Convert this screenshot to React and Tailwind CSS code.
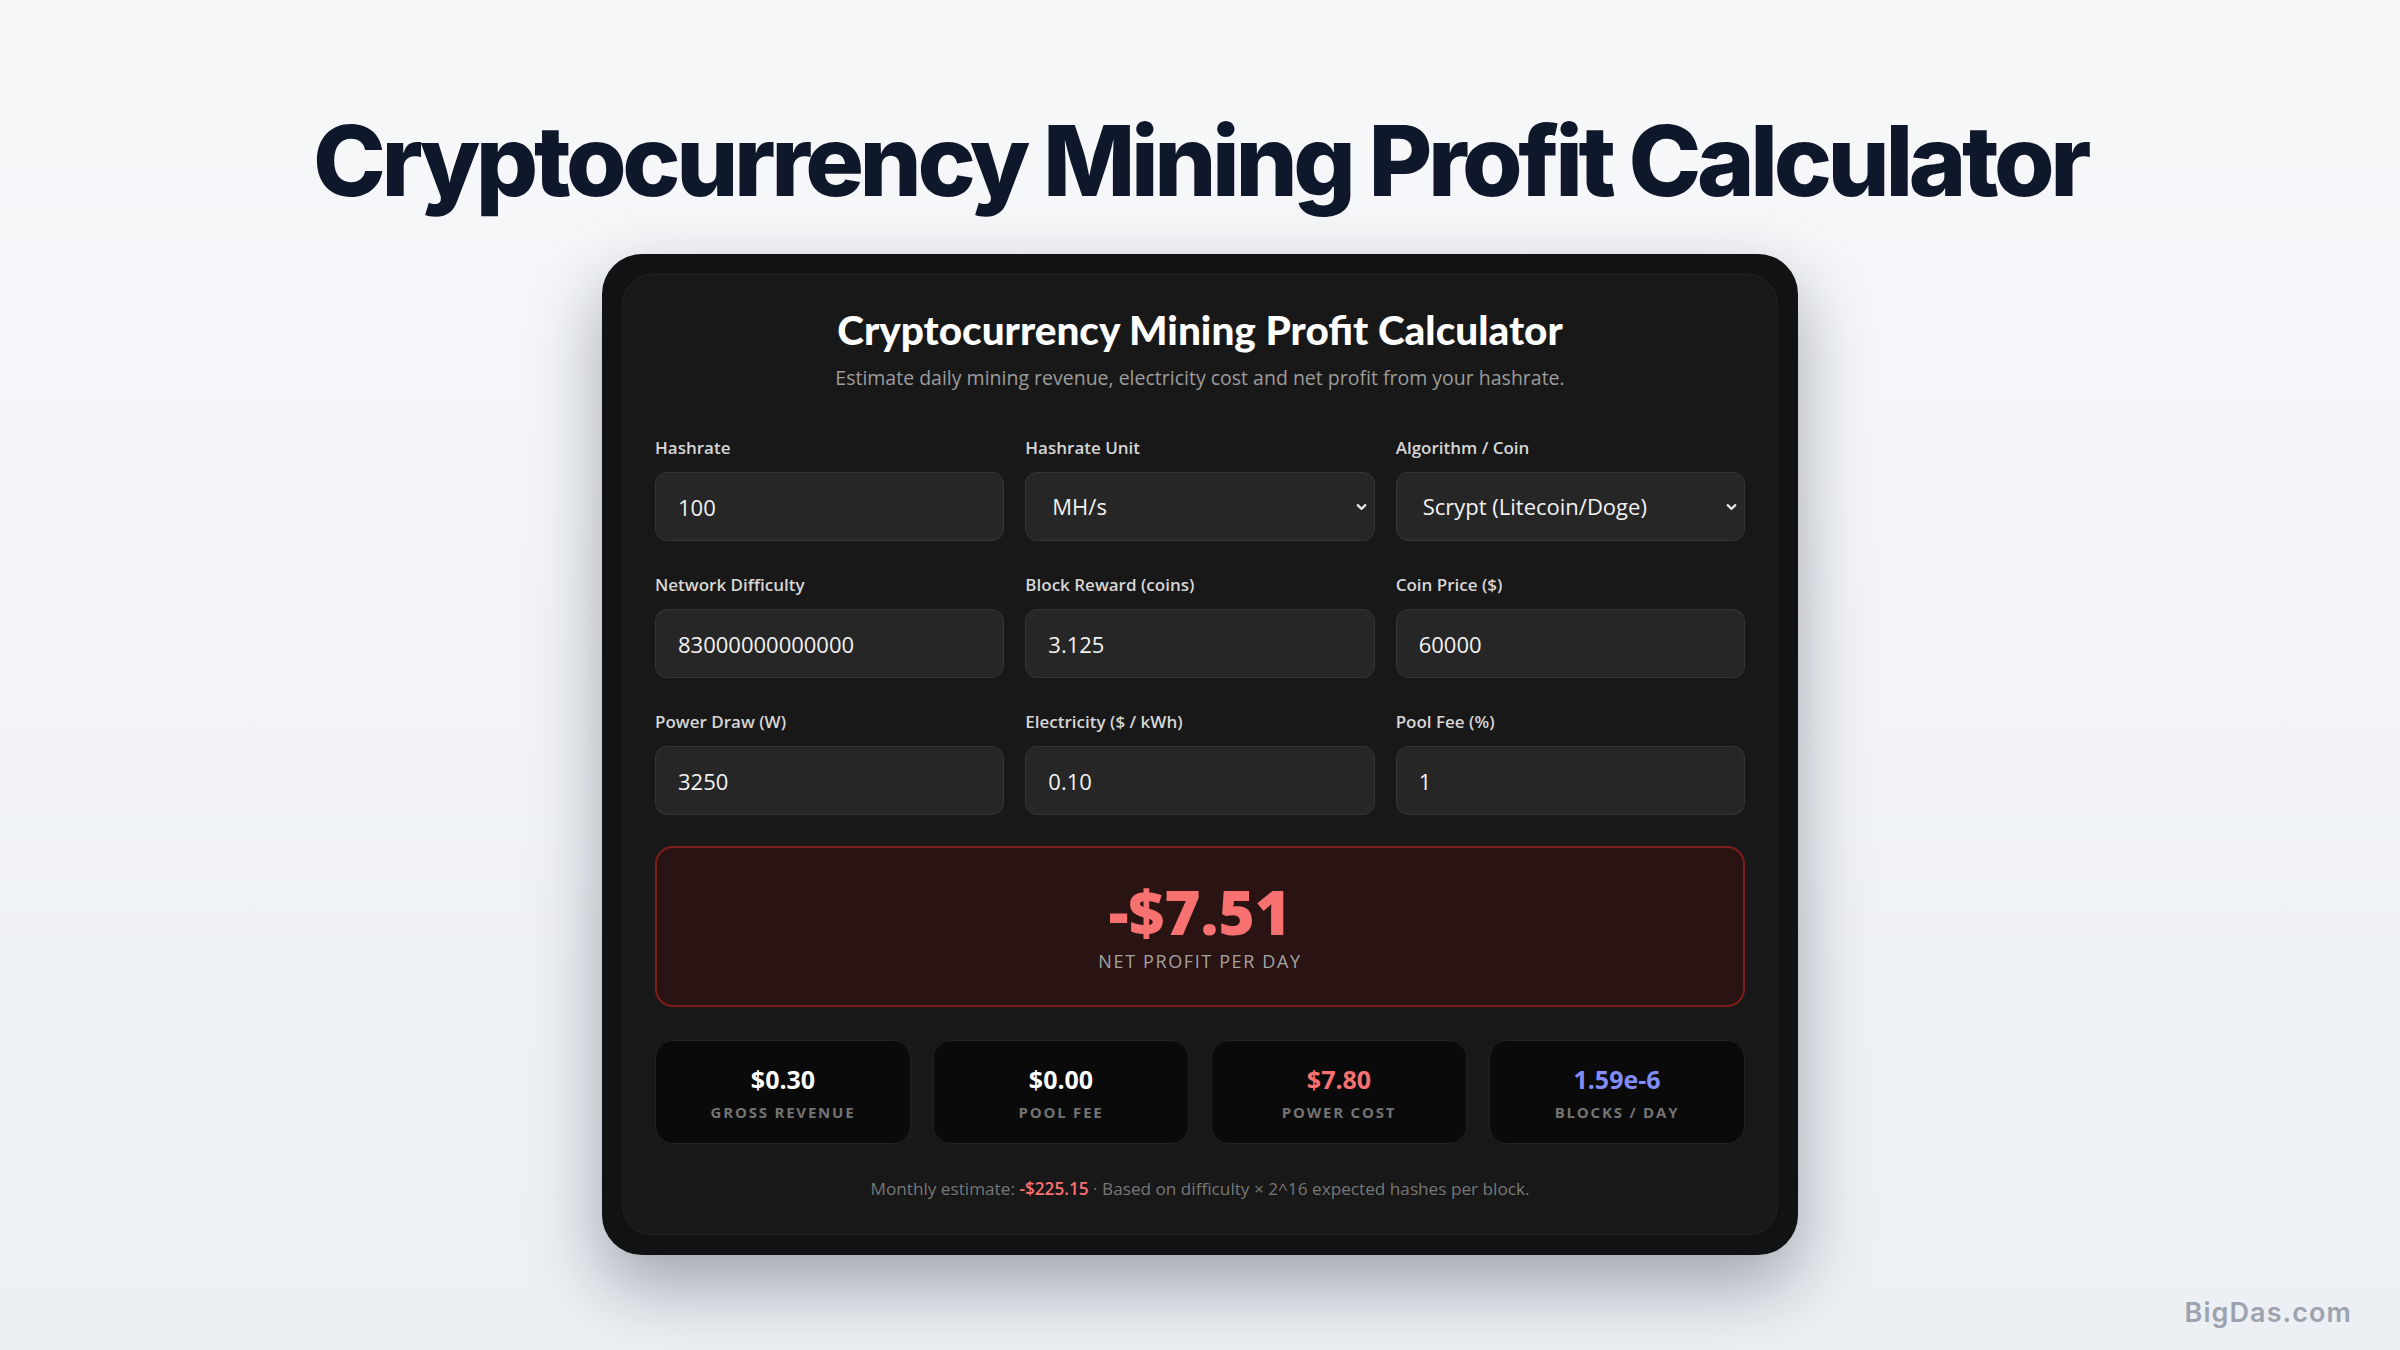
import { ChevronDown } from 'lucide-react'

const fields = [
  { label: 'Hashrate', value: '100' },
  { label: 'Hashrate Unit', value: 'MH/s', select: ['H/s', 'KH/s', 'MH/s', 'GH/s', 'TH/s'] },
  {
    label: 'Algorithm / Coin',
    value: 'Scrypt (Litecoin/Doge)',
    select: ['SHA-256 (Bitcoin)', 'Scrypt (Litecoin/Doge)', 'Ethash (ETC)'],
  },
  { label: 'Network Difficulty', value: '83000000000000' },
  { label: 'Block Reward (coins)', value: '3.125' },
  { label: 'Coin Price ($)', value: '60000' },
  { label: 'Power Draw (W)', value: '3250' },
  { label: 'Electricity ($ / kWh)', value: '0.10' },
  { label: 'Pool Fee (%)', value: '1' },
]

const stats = [
  { value: '$0.30', label: 'Gross Revenue', color: 'text-white' },
  { value: '$0.00', label: 'Pool Fee', color: 'text-white' },
  { value: '$7.80', label: 'Power Cost', color: 'text-[#f87171]' },
  { value: '1.59e-6', label: 'Blocks / Day', color: 'text-[#818cf8]' },
]

function Field({ label, value, select }) {
  const box =
    'h-[69px] w-full rounded-[12px] border border-[#363636] bg-[#262626] px-[22px] text-[22px] text-[#f2f2f2] outline-none'
  return (
    <label className="flex flex-col">
      <span className="mb-[12px] text-[17px] font-semibold leading-[24px] text-[#d6d6d6]">{label}</span>
      {select ? (
        <div className="relative">
          <select defaultValue={value} className={`${box} appearance-none pl-[26px]`}>
            {select.map((o) => (
              <option key={o}>{o}</option>
            ))}
          </select>
          <ChevronDown
            size={15}
            strokeWidth={3.5}
            className="pointer-events-none absolute right-[6px] top-1/2 -translate-y-1/2 text-[#e5e5e5]"
          />
        </div>
      ) : (
        <input defaultValue={value} className={box} />
      )}
    </label>
  )
}

export default function App() {
  return (
    <div
      className="flex min-h-[1350px] w-full flex-col items-center bg-gradient-to-b from-[#f7f8fa] to-[#eceff3]"
      style={{ fontFamily: '"Open Sans", "Noto Sans", sans-serif' }}
    >
      <h1
        className="mt-[98px] text-[98px] font-extrabold leading-[126px] tracking-[-0.045em] text-[#0f172a]"
        style={{ fontFamily: 'Inter, sans-serif' }}
      >
        Cryptocurrency Mining Profit Calculator
      </h1>

      <div className="mt-[30px] w-[1196px] rounded-[40px] bg-[#111214] p-[20px] shadow-[0_30px_70px_rgba(15,23,42,0.35)]">
        <div className="flex flex-col rounded-[30px] border border-[#242424] bg-[#181818] px-[32px] pb-[32px] pt-[29px]">
          <div className="flex flex-col items-center">
            <h2
              className="text-[40.5px] font-black leading-[52px] text-white"
              style={{ fontFamily: 'Lato, "Open Sans", sans-serif' }}
            >
              Cryptocurrency Mining Profit Calculator
            </h2>
            <p className="mt-[9px] text-[19.5px] leading-[26px] text-[#9c9c9c]">
              Estimate daily mining revenue, electricity cost and net profit from your hashrate.
            </p>
          </div>

          <div className="mt-[45px] grid grid-cols-3 gap-x-[21px] gap-y-[32px]">
            {fields.map((f) => (
              <Field key={f.label} {...f} />
            ))}
          </div>

          <div className="mt-[31px] flex h-[161px] flex-col items-center justify-center rounded-[18px] border-2 border-[#7f1d1d] bg-[#2a1313]">
            <div className="text-[62px] font-extrabold leading-[60px] text-[#f87171]">-$7.51</div>
            <div className="mt-[8px] text-[18px] font-medium uppercase leading-[24px] tracking-[0.09em] text-[#a3a3a3]">
              Net Profit per Day
            </div>
          </div>

          <div className="mt-[33px] grid grid-cols-4 gap-[22px]">
            {stats.map((s) => (
              <div
                key={s.label}
                className="flex h-[104px] flex-col items-center justify-center rounded-[18px] border border-[#222] bg-[#0a0a0a]"
              >
                <div className={`text-[25px] font-bold leading-[34px] ${s.color}`}>{s.value}</div>
                <div className="mt-[6px] text-[15px] font-bold uppercase leading-[20px] tracking-[0.12em] text-[#737373]">
                  {s.label}
                </div>
              </div>
            ))}
          </div>

          <p className="mt-[32px] text-center text-[17.2px] leading-[26px] text-[#777]">
            Monthly estimate: <span className="font-semibold text-[#f87171]">-$225.15</span> · Based on difficulty × 2^16
            expected hashes per block.
          </p>
        </div>
      </div>

      <div className="flex w-full justify-end pr-[48px] pt-[38px]">
        <span
          className="text-[27px] font-semibold tracking-[0.04em] text-[#9ca3af]"
          style={{ fontFamily: 'Inter, sans-serif' }}
        >
          BigDas.com
        </span>
      </div>
    </div>
  )
}
